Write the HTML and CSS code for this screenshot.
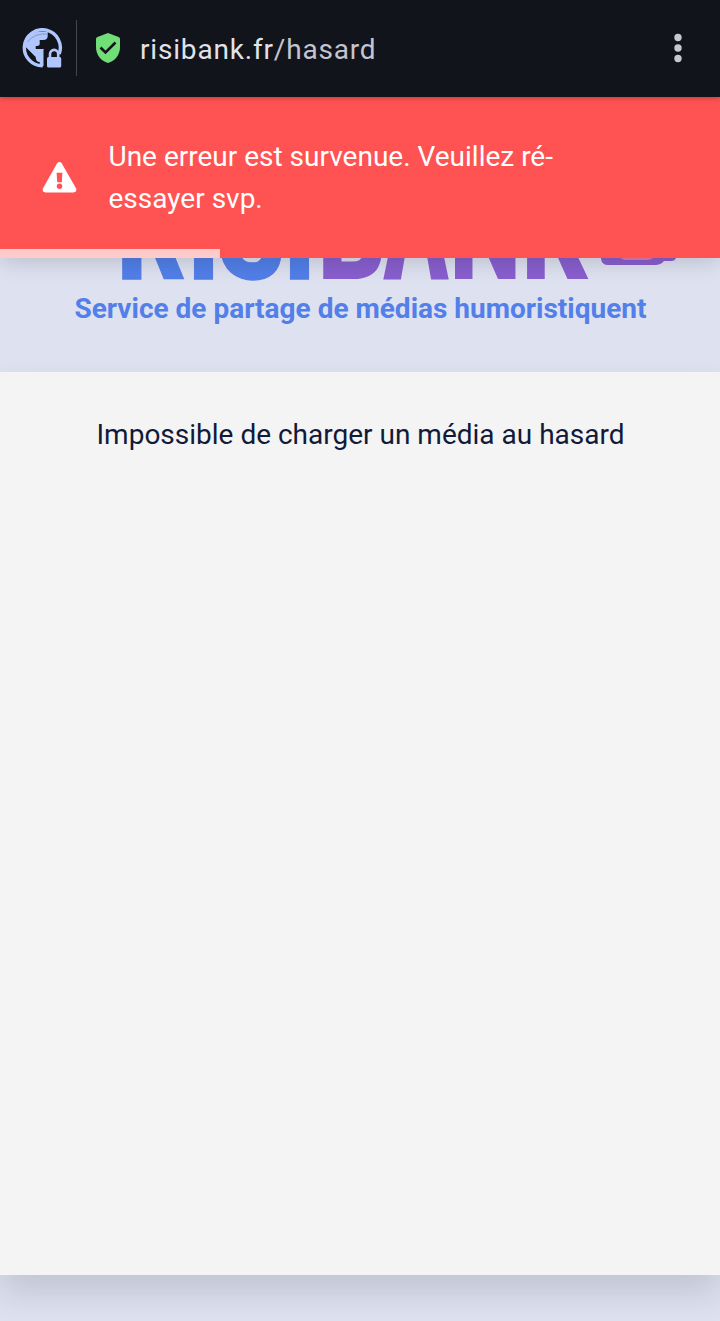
FILE: index.html
```html
<!DOCTYPE html>
<html lang="fr">
<head>
  <meta charset="UTF-8">
  <meta name="viewport" content="width=device-width, initial-scale=1.0">
  <title>RisiBank</title>
  <link rel="stylesheet" href="styles.css">
</head>
<body>
  <div class="browser-bar">
    <svg class="globe" width="42" height="42" viewBox="0.300 0 42 42">
      <path d="M38.500 26A18 18 0 1 0 22 37.700" fill="none" stroke="#b0c6ff" stroke-width="3.400"/>
      <path d="M4 14C8 6 15 2 27 4V8Q27 12 22.500 12H19V16Q19 18 15 18V21H23V38H19V34Q15 34 15 29L4 18Z" fill="#b0c6ff"/>
      <path d="M7 14Q13 5 27 6" fill="none" stroke="#879abf" stroke-width="1"/>
      <path d="M23 22H37V40H23Z" fill="#11141b"/>
      <rect x="26.300" y="29" width="14.200" height="10.500" rx="1.500" fill="#b0c6ff"/>
      <path d="M29.300 30V26a4 4 0 0 1 8.200 0V30" fill="none" stroke="#b0c6ff" stroke-width="2.600"/>
    </svg>
    <span class="separator"></span>
    <svg class="shield" width="24" height="30" viewBox="0 0 24 30">
      <path d="M12 0L22.500 3.900Q24 4.500 24 6V14C24 22 19 28 12 30C5 28 0 22 0 14V6Q0 4.500 1.500 3.900Z" fill="#72de78"/>
      <path d="M4.500 14.500L9.500 19.500L19.500 9.500" fill="none" stroke="#11141b" stroke-width="2.600"/>
    </svg>
    <span class="url">risibank.fr<span class="path">/hasard</span></span>
    <svg class="dots" width="8" height="30" viewBox="0 0 8 30">
      <circle cx="4" cy="4.500" r="3.700"/>
      <circle cx="4" cy="15" r="3.700"/>
      <circle cx="4" cy="25.500" r="3.700"/>
    </svg>
  </div>

  <div class="page">
    <div class="toast">
      <svg class="warning" width="35" height="31" viewBox="0 0 36 32">
        <path d="M15.400 1.500Q18 -1.500 20.400 1.500L35 27Q36.500 31 32.500 31.500H3.500Q-.5 31 1 27Z" fill="#fff"/>
        <path d="M15 11H21L20.400 21H15.700Z" fill="#ff5252"/>
        <circle cx="18" cy="25" r="2.800" fill="#ff5252"/>
      </svg>
      <p>Une erreur est survenue. Veuillez ré-essayer svp.</p>
      <div class="progress"></div>
    </div>

    <header>
      <svg class="logo" width="720" height="189" viewBox="0 0 720 189">
        <text class="blue" transform="translate(0 182) scale(1 1.25)" x="117 187.500 218 283.500">RISI</text>
        <text class="purple" transform="translate(0 182) scale(1 1.25)" x="317.500">B</text>
        <text class="purple" transform="translate(383.500 182) scale(.9 1.6)">A</text>
        <text class="purple" transform="translate(449.500 182) scale(.96 1.25)">N</text>
        <text class="purple" transform="translate(521.500 182) scale(.97 1.25)">K</text>
        <path d="M601 150H676V161Q675 164 671 164H664Q661 168 655 168H608Q602 168 601 162Z" fill="#895fce"/>
        <path d="M620 150H653V161Q651 163 647 163H626Q622 163 620 160Z" fill="#e778ae"/>
      </svg>
      <p class="tagline">Service de partage de médias humoristiquent</p>
    </header>

    <main>
      <p>Impossible de charger un média au hasard</p>
    </main>
  </div>
</body>
</html>
```

FILE: styles.css
```css
body {
  margin: 0;
  font-family: Roboto, sans-serif;
  font-size: 28px;
  background-color: #dee1f0;
  color: #111a38;
}
p {
  margin: 0;
}
.browser-bar {
  position: relative;
  z-index: 3;
  display: flex;
  align-items: center;
  box-sizing: border-box;
  height: 97px;
  padding: 0 38px 2px 21px;
  background-color: #11141b;
  box-shadow: 0 1px 5px rgba(0, 0, 0, 0.25);
}
.globe {
  margin-top: 2px;
}
.separator {
  width: 1px;
  height: 56px;
  margin: 0 19px 0 13px;
  background-color: #45474f;
}
.url {
  margin: 3px auto 0 20px;
  color: #e3e2e9;
  letter-spacing: 0.82px;
}
.path {
  color: #c4c5d0;
}
.dots {
  fill: #c8c7d1;
}
.page {
  position: relative;
  padding-bottom: 46px;
}
.toast {
  position: absolute;
  z-index: 2;
  top: 0;
  left: 0;
  display: flex;
  align-items: center;
  box-sizing: border-box;
  width: 100%;
  height: 161px;
  padding: 0 44px 0 42px;
  background-color: #ff5252;
  color: #fff;
  box-shadow: 0 2px 20px rgba(0, 0, 0, 0.12), 0 4px 30px rgba(0, 0, 0, 0.06);
}
.toast p {
  width: 500px;
  margin-left: 31.5px;
  line-height: 42px;
}
.progress {
  position: absolute;
  bottom: 0;
  left: 0;
  width: 220px;
  height: 9px;
  background-color: #ffcaca;
}
header {
  height: 275px;
  text-align: center;
}
.logo {
  display: block;
  font-size: 106px;
  font-weight: 900;
  stroke-width: 1px;
}
.blue {
  fill: #527fe8;
  stroke: #527fe8;
}
.purple {
  fill: #895fce;
}
.tagline {
  color: #527fe8;
  font-weight: bold;
  line-height: 46px;
  padding-left: 1px;
}
main {
  box-sizing: border-box;
  height: 903px;
  padding: 42px 0 0 1px;
  background-color: #f4f4f4;
  text-align: center;
  line-height: 42px;
  box-shadow: 0 18px 32px rgba(0, 0, 0, 0.13);
}
```
